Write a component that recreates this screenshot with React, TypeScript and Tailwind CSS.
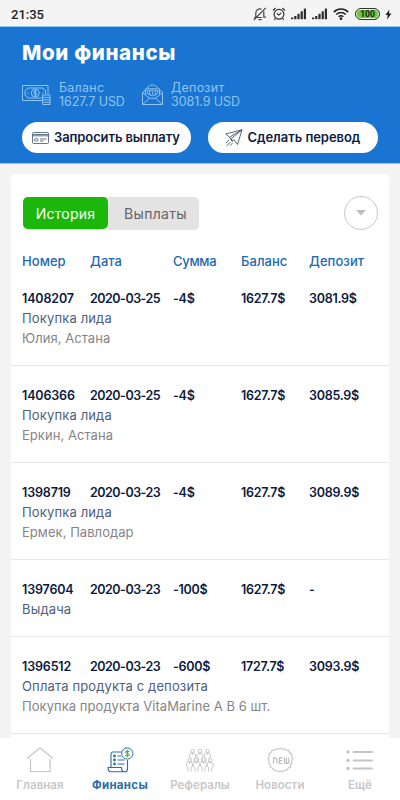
import { ReactNode } from "react";
import clsx from "clsx";

interface Operation {
  id: string;
  date: string;
  sum: string;
  balance: string;
  deposit: string;
  title: string;
  note?: string;
}

const operations: Operation[] = [
  {
    id: "1408207",
    date: "2020-03-25",
    sum: "-4$",
    balance: "1627.7$",
    deposit: "3081.9$",
    title: "Покупка лида",
    note: "Юлия, Астана",
  },
  {
    id: "1406366",
    date: "2020-03-25",
    sum: "-4$",
    balance: "1627.7$",
    deposit: "3085.9$",
    title: "Покупка лида",
    note: "Еркин, Астана",
  },
  {
    id: "1398719",
    date: "2020-03-23",
    sum: "-4$",
    balance: "1627.7$",
    deposit: "3089.9$",
    title: "Покупка лида",
    note: "Ермек, Павлодар",
  },
  {
    id: "1397604",
    date: "2020-03-23",
    sum: "-100$",
    balance: "1627.7$",
    deposit: "-",
    title: "Выдача",
  },
  {
    id: "1396512",
    date: "2020-03-23",
    sum: "-600$",
    balance: "1727.7$",
    deposit: "3093.9$",
    title: "Оплата продукта с депозита",
    note: "Покупка продукта VitaMarine A B 6 шт.",
  },
];

const columns = "grid grid-cols-[68px_83px_68px_68px_1fr]";

const Signal = () => (
  <svg width="16" height="12" viewBox="0 0 16 12" fill="#2b2b2b">
    <rect x="0" y="9.5" width="2.2" height="1.7" />
    <rect x="3.2" y="8" width="2.2" height="3.2" />
    <rect x="6.4" y="5.8" width="2.2" height="5.4" />
    <rect x="9.6" y="3.3" width="2.2" height="7.9" />
    <rect x="12.8" y="0.6" width="2.2" height="10.6" />
  </svg>
);

const StatusBar = () => (
  <div className="flex h-[26px] items-center bg-[#f4f4f4] pl-[11px] pr-2 pt-0.5 text-[#222]">
    <span className="font-[Roboto] text-[13px] font-medium leading-none">21:35</span>
    <div className="ml-auto flex items-center">
      <svg width="14" height="14" viewBox="0 0 14 14" fill="none" stroke="#444" strokeWidth="1.2">
        <path d="M1 10.500h7.800M2.800 10.200V6a4.100 4.100 0 0 1 5.800-3.700M10.800 4.500v5.700h2M5.500 12.600h3M12.800.8.8 13" />
      </svg>
      <svg className="ml-[5px]" width="14" height="14" viewBox="0 0 14 14" fill="none" stroke="#333" strokeWidth="1.2">
        <circle cx="7" cy="7.3" r="4.9" />
        <path d="m4.800 6.600 2.100 1.500 2.400-2.200M1 3.500 3.600 1M10.400 1 13 3.500M3.200 11.500l-1 1.300M10.800 11.500l1 1.300" />
      </svg>
      <div className="ml-[5px] flex gap-[5px]">
        <Signal />
        <Signal />
      </div>
      <svg className="ml-[5px]" width="16" height="12" viewBox="0 0 16 12" fill="none" stroke="#222" strokeWidth="1.5">
        <path d="M.8 4.100c4-4 10.400-4 14.400 0M3.200 6.500c2.700-2.600 6.900-2.600 9.600 0M5.600 8.800c1.400-1.200 3.400-1.200 4.800 0" />
        <circle cx="8" cy="10.700" r=".6" fill="#222" />
      </svg>
      <div className="ml-[6px] flex h-[12px] w-[25px] items-center justify-center rounded-full border border-[#333] bg-[#67c83a] font-[Roboto] text-[8.5px] font-bold leading-none shadow-[inset_0_0_0_1px_#e8f7df]">
        100
      </div>
      <svg className="ml-[5px]" width="7" height="11" viewBox="0 0 7 11" fill="#222">
        <path d="M4.400.4.500 6h2.200L2 10.500 6.500 4.600H4L4.400.4Z" />
      </svg>
    </div>
  </div>
);

const MoneyIcon = () => (
  <svg width="29" height="22" viewBox="0 0 29 22" fill="none" stroke="#8fc3ef" strokeWidth="1">
    <path d="M20.500 16.500H.5V1.500h25.500v9" />
    <path d="M19.500 14H5.500a3 3 0 0 0-2.500-2.500V6.500A3 3 0 0 0 5.500 4h15.500a3 3 0 0 0 2.500 2.500v4" />
    <circle cx="13.300" cy="9" r="4" />
    <path d="M15 7.500c-.5-.8-3.300-.9-3.300.5 0 1.600 3.400.5 3.400 2.100 0 1.300-2.900 1.300-3.500.3M13.300 5.800v6.400M5 9h1.500M20 9h1.500" />
    <path d="M20.500 11h7.500v9.500h-7.500zM20.500 13.400h7.500M20.500 15.800h7.500M20.500 18.200h7.500" />
  </svg>
);

const EnvelopeIcon = () => (
  <svg width="21" height="22" viewBox="0 0 21 22" fill="none" stroke="#8fc3ef" strokeWidth="1">
    <path d="M.5 8.500v12h20v-12M.5 20.500 8 13.800M20.500 20.500 13 13.800M.5 8.500l7 5.800h6l7-5.800" />
    <path d="M.5 8.500 4 5.300M20.500 8.500 17 5.300M5 4.300C6 2.300 8 1 10.500 1S15 2.300 16 4.300" />
    <path d="M3.500 10.500V4.800h14v5.700M7.500 6.500H5.300v2.800l1.700 1.500h1.200M13.500 6.500h2.200v2.800L14 10.800h-1.200" />
    <circle cx="10.500" cy="8.800" r="3" />
    <path d="M10.500 7.300v3" />
  </svg>
);

const CardIcon = () => (
  <svg width="17" height="12" viewBox="0 0 17 12" fill="none" stroke="#53657d" strokeWidth=".9">
    <rect x=".5" y=".5" width="16" height="11" rx="1" />
    <path d="M.5 2.500h16M.5 3.800h16M8 7h6.500M8 9h3.500" />
    <rect x="2.500" y="6.700" width="3.500" height="2.200" rx=".8" />
  </svg>
);

const PlaneIcon = () => (
  <svg width="18" height="18" viewBox="0 0 18 18" fill="none" stroke="#2f4059" strokeWidth=".8" strokeLinejoin="round">
    <path d="M17 .8.800 4.900l3.700 3.300L17 .8 6.500 9.300l.5 3 2-1.600 3.500 4.800L17 .8ZM4.500 8.200l2.500 4.100" />
    <path d="m4 10.700-3 3.500M5.200 13.200l-3.500 3.900M7.500 14l-2.300 2.600" />
  </svg>
);

interface TotalProps {
  icon: ReactNode;
  label: string;
  value: string;
}

const Total = ({ icon, label, value }: TotalProps) => (
  <div className="flex items-center">
    {icon}
    <div className="ml-2 whitespace-nowrap text-[12.5px] leading-[14px] text-[#8fc3ef]">
      <p className="tracking-[0.25px]">{label}</p>
      <p className="tracking-[-0.05px]">{value}</p>
    </div>
  </div>
);

const Header = () => (
  <header className="h-[138px] border-y border-[#8cc4f3] bg-[#1a75d2] px-[22px]">
    <h1 className="pt-[13px] text-[20.5px] font-extrabold leading-[26px] tracking-[0.65px] text-white">
      Мои финансы
    </h1>
    <div className="mt-[15px] flex h-7">
      <div className="w-[120px]">
        <Total icon={<MoneyIcon />} label="Баланс" value="1627.7 USD" />
      </div>
      <Total icon={<EnvelopeIcon />} label="Депозит" value="3081.9 USD" />
    </div>
    <div className="mt-[13px] flex gap-[17px] text-[13px] font-semibold text-[#0d1d42]">
      <button className="flex h-[31px] w-[170px] items-center gap-[5px] whitespace-nowrap rounded-full bg-white pl-[10px]">
        <CardIcon />
        <span className="pt-px tracking-[-0.1px]">Запросить выплату</span>
      </button>
      <button className="flex h-[31px] w-[170px] items-center gap-1 whitespace-nowrap rounded-full bg-white pl-[17px]">
        <PlaneIcon />
        <span className="pt-px tracking-[-0.05px]">Сделать перевод</span>
      </button>
    </div>
  </header>
);

const Row = ({ item }: { item: Operation }) => (
  <div className="border-b border-[#e8e8e8] pb-[17px] pl-[11px] pt-5 text-[13px] leading-5">
    <div className={clsx(columns, "text-[12.5px] font-semibold tracking-[-0.25px] text-[#0b1a40]")}>
      <span className="tracking-[-0.15px]">{item.id}</span>
      <span className="tracking-[-0.5px]">{item.date}</span>
      <span>{item.sum}</span>
      <span>{item.balance}</span>
      <span>{item.deposit}</span>
    </div>
    <p className="-mt-px tracking-[0.15px] text-[#4d617c]">{item.title}</p>
    {item.note && <p className="tracking-[0.05px] text-[#858585]">{item.note}</p>}
  </div>
);

const HomeIcon = () => (
  <svg width="28" height="26" viewBox="0 0 28 26" fill="none" stroke="#c4c4c4" strokeWidth="1.200">
    <path d="M1 11.500 14 1l13 10.500M4.500 12v12.500h19.500V12" />
  </svg>
);

const FinanceIcon = () => (
  <svg width="27" height="26" viewBox="0 0 27 26" fill="none" stroke="#286ca8" strokeWidth="1.100">
    <path d="M14.500 5H5.800C4.500 5 4 5.800 4 7v13M20.500 13v9c0 1.600-1 2.800-2.500 2.800H3.800C2 24.800 1 23 1 20.500h13.500c0 2.500.8 4.300 3 4.300" />
    <path d="M10.500 9h3.500M10.500 13h7M10.500 17h7" />
    <circle cx="7.500" cy="9" r=".9" />
    <circle cx="7.500" cy="13" r=".9" />
    <circle cx="7.500" cy="17" r=".9" />
    <circle cx="20.300" cy="6.500" r="5.600" fill="#fff" strokeWidth="1" />
    <path d="M22.300 4.900c-.5-1-3.700-1.100-3.700.3 0 1.700 3.700.8 3.700 2.600 0 1.500-3.300 1.500-4 .3M20.400 2.800v7.500" stroke="#42b72e" />
  </svg>
);

const Person = ({ x, y }: { x: number; y: number }) => (
  <g transform={`translate(${x} ${y})`}>
    <circle cx="3.500" cy="2" r="1.700" />
    <path d="M2 13.500V9.500L.5 8.300V6.200c0-1.300.8-2 2-2h2c1.200 0 2 .7 2 2v2.100L5 9.500v4M3.500 4.200v1.500" />
  </g>
);

const PeopleIcon = () => (
  <svg width="28" height="25" viewBox="0 0 28 25" stroke="#c0c0c0" strokeWidth=".9" fill="#fff">
    <Person x={3} y={1} />
    <Person x={10.500} y={1} />
    <Person x={18} y={1} />
    <Person x={0} y={10} />
    <Person x={6.900} y={10} />
    <Person x={14} y={10} />
    <Person x={20.700} y={10} />
  </svg>
);

const NewsIcon = () => (
  <svg width="27" height="27" viewBox="0 0 27 27" fill="none" stroke="#c4c4c4" strokeWidth="1.100">
    <path d="M13.500 1q1.800 2.200 4.200.7 1.200 2.300 4.200 1.700.2 2.800 3.100 3.700-.9 2.700 1 4.600-1.900 2-1 4.300-1.900 1.500-1.400 4.200-2.800.2-3.700 2.900-2.700-.6-4.200 1.700-2.200-1.400-4.400 0-1.700-2-4.200-1.300-.9-2.700-3.500-3.300.2-2.800-1.900-4.200 1-2.600-.7-4.400 1.800-2 .9-4.500 2.700-.9 3.100-3.700 2.900.5 4.100-1.700 2.700 1.300 4.400-.7Z" />
    <path
      d="M6.500 16.500v-5.800c1.700 0 3.300.4 3.300 2.500v3.300M15.600 10.800h-3.300v5.700h3.300M12.300 13.600h3M17.500 10.500v4.300c0 2.200 2 2.200 2 .2 0 2 2.300 2 2.300-.2v-4.300M19.500 11v4"
      stroke="#bdbdbd"
      strokeWidth="1.200"
    />
  </svg>
);

const MoreIcon = () => (
  <svg width="28" height="21" viewBox="0 0 28 21" fill="#c4c4c4">
    {[2, 10.500, 18.500].map((y) => (
      <g key={y}>
        <circle cx="2" cy={y} r="1.700" />
        <rect x="6.500" y={y - 1.1} width="20.500" height="2.200" rx="1.100" />
      </g>
    ))}
  </svg>
);

const tabs = [
  { label: "Главная", icon: <HomeIcon /> },
  { label: "Финансы", icon: <FinanceIcon />, active: true },
  { label: "Рефералы", icon: <PeopleIcon /> },
  { label: "Новости", icon: <NewsIcon /> },
  { label: "Ещё", icon: <MoreIcon /> },
];

const App = () => {
  return (
    <div className="flex h-[800px] w-[400px] flex-col overflow-hidden bg-[#f4f4f4] font-[Inter,sans-serif]">
      <StatusBar />
      <Header />
      <main className="mx-[11px] mt-[10px] h-[564px] shrink-0 overflow-hidden rounded-t-[5px] bg-white">
        <div className="flex items-center justify-between pl-3 pr-[11px] pt-[22px]">
          <div className="flex h-[33px] w-[176px] rounded-[5px] bg-[#e3e3e3] text-[14px]">
            <button className="h-8 w-[85px] rounded-[5px] bg-[#1bb70b] pt-px tracking-[0.25px] text-white">
              История
            </button>
            <button className="flex-1 pl-1 tracking-[0.3px] text-[#666]">Выплаты</button>
          </div>
          <button className="flex size-[34px] items-center justify-center rounded-full border border-[#c9c9c9]">
            <svg width="10" height="6" viewBox="0 0 10 6" fill="#bdbdbd">
              <path d="M0 0h10L5 5.500Z" />
            </svg>
          </button>
        </div>
        <div
          className={clsx(
            columns,
            "mt-[21px] pl-[11px] text-[13px] font-medium leading-5 tracking-[0.05px] text-[#1d69b0]"
          )}
        >
          <span>Номер</span>
          <span>Дата</span>
          <span className="tracking-[-0.3px]">Сумма</span>
          <span>Баланс</span>
          <span>Депозит</span>
        </div>
        <div className="-mt-[2px]">
          {operations.map((item) => (
            <Row key={item.id} item={item} />
          ))}
        </div>
      </main>
      <nav className="grid h-[62px] shrink-0 grid-cols-5 bg-white">
        {tabs.map((tab) => (
          <div key={tab.label} className="flex flex-col items-center">
            <div className="flex h-[37px] items-end justify-center">
              <div className="flex h-[30px] items-center">{tab.icon}</div>
            </div>
            <span
              className={clsx(
                "text-[11.5px] leading-5",
                tab.active
                  ? "font-bold tracking-[0.3px] text-[#286ca8]"
                  : "font-semibold tracking-[0.05px] text-[#c8c8c8]"
              )}
            >
              {tab.label}
            </span>
          </div>
        ))}
      </nav>
    </div>
  );
};

export default App;
